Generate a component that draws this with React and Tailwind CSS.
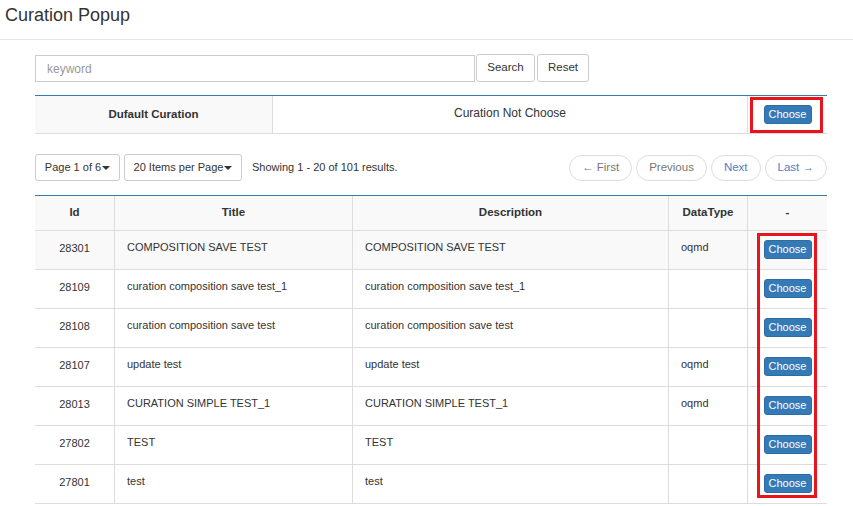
import React from "react";

const rows = [
  { id: "28301", title: "COMPOSITION SAVE TEST", desc: "COMPOSITION SAVE TEST", type: "oqmd" },
  { id: "28109", title: "curation composition save test_1", desc: "curation composition save test_1", type: "" },
  { id: "28108", title: "curation composition save test", desc: "curation composition save test", type: "" },
  { id: "28107", title: "update test", desc: "update test", type: "oqmd" },
  { id: "28013", title: "CURATION SIMPLE TEST_1", desc: "CURATION SIMPLE TEST_1", type: "oqmd" },
  { id: "27802", title: "TEST", desc: "TEST", type: "" },
  { id: "27801", title: "test", desc: "test", type: "" },
];

const cols = "grid grid-cols-[80px_238px_316px_79px_79px]";

function ChooseButton() {
  return (
    <button className="h-[19px] w-[48px] rounded-[3px] border border-[#2e6da4] bg-[#337ab7] text-[11px] leading-[17px] text-white">
      Choose
    </button>
  );
}

function PagerButton({ children, disabled }) {
  return (
    <button
      className={`h-[26px] rounded-full border border-[#ddd] bg-white px-[12px] text-[11.5px] ${
        disabled ? "text-[#777]" : "text-[#4f7dc0]"
      }`}
    >
      {children}
    </button>
  );
}

function Caret() {
  return <span className="ml-[1px] inline-block border-x-[4px] border-t-[4px] border-x-transparent border-t-[#333] align-middle" />;
}

export default function App() {
  return (
    <div className="min-h-[506px] bg-white text-[#333]" style={{ fontFamily: '"Liberation Sans", Arial, sans-serif' }}>
      <div className="h-[40px] border-b border-[#e5e5e5] pl-[5px] pt-[5px]">
        <h1 className="text-[18px] leading-[20px]">Curation Popup</h1>
      </div>

      <div className="pl-[35px] pr-[26px]">
        {/* search */}
        <div className="mt-[14px] flex items-start">
          <input
            placeholder="keyword"
            className="mt-[1px] h-[27px] w-[440px] border border-[#ccc] px-[11px] text-[12px] outline-none placeholder:text-[#999]"
          />
          <button className="ml-[1px] h-[28px] w-[59px] rounded-[3px] border border-[#ccc] bg-white text-[11.5px]">Search</button>
          <button className="ml-[2px] h-[28px] w-[52px] rounded-[3px] border border-[#ccc] bg-white text-[11.5px]">Reset</button>
        </div>

        {/* default curation */}
        <div className="relative mt-[13px] grid h-[39px] grid-cols-[238px_475px_79px] border-t border-b border-t-[#337ab7] border-b-[#ddd]">
          <div className="flex items-center justify-center border-r border-[#ddd] bg-[#f9f9f9] text-[11.5px] font-bold">
            Dufault Curation
          </div>
          <div className="border-r border-[#ddd] pt-[9px] text-center text-[12px] leading-[16px]">Curation Not Choose</div>
          <div className="flex items-start justify-center pt-[9px]">
            <ChooseButton />
          </div>
          <div className="pointer-events-none absolute left-[715px] top-[1px] h-[36px] w-[73px] border-[3px] border-[#e8131b]" />
        </div>

        {/* pagination */}
        <div className="mt-[20px] flex items-center">
          <button className="h-[27px] w-[85px] rounded-[3px] border border-[#ccc] bg-white text-[11px]">
            Page 1 of 6<Caret />
          </button>
          <button className="ml-[4px] h-[27px] w-[118px] rounded-[3px] border border-[#ccc] bg-white text-[11px]">
            20 Items per Page<Caret />
          </button>
          <span className="ml-[10px] text-[11px]">Showing 1 - 20 of 101 results.</span>
          <div className="ml-auto flex gap-[4px]">
            <PagerButton disabled>← First</PagerButton>
            <PagerButton disabled>Previous</PagerButton>
            <PagerButton>Next</PagerButton>
            <PagerButton>Last →</PagerButton>
          </div>
        </div>

        {/* table */}
        <div className="relative mt-[14px] border-t border-[#337ab7]">
          <div className={`${cols} h-[35px] border-b border-[#ddd] bg-[#f9f9f9] text-[11.5px] font-bold`}>
            {["Id", "Title", "Description", "DataType", "-"].map((h, i) => (
              <div key={h} className={`flex items-center justify-center ${i < 4 ? "border-r border-[#ddd]" : ""}`}>
                {h}
              </div>
            ))}
          </div>
          {rows.map((r, i) => (
            <div
              key={r.id}
              className={`${cols} h-[39px] border-b border-[#ddd] text-[11px] leading-[16px] ${i === 0 ? "bg-[#f9f9f9]" : ""}`}
            >
              <div className="border-r border-[#ddd] pt-[9px] text-center">{r.id}</div>
              <div className="border-r border-[#ddd] px-[12px] pt-[8px]">{r.title}</div>
              <div className="border-r border-[#ddd] px-[12px] pt-[8px]">{r.desc}</div>
              <div className="border-r border-[#ddd] px-[12px] pt-[8px]">{r.type}</div>
              <div className="flex justify-center pt-[9px]">
                <ChooseButton />
              </div>
            </div>
          ))}
          <div className="pointer-events-none absolute left-[722px] top-[37px] h-[265px] w-[60px] border-[3px] border-[#e8131b]" />
        </div>
      </div>
    </div>
  );
}
